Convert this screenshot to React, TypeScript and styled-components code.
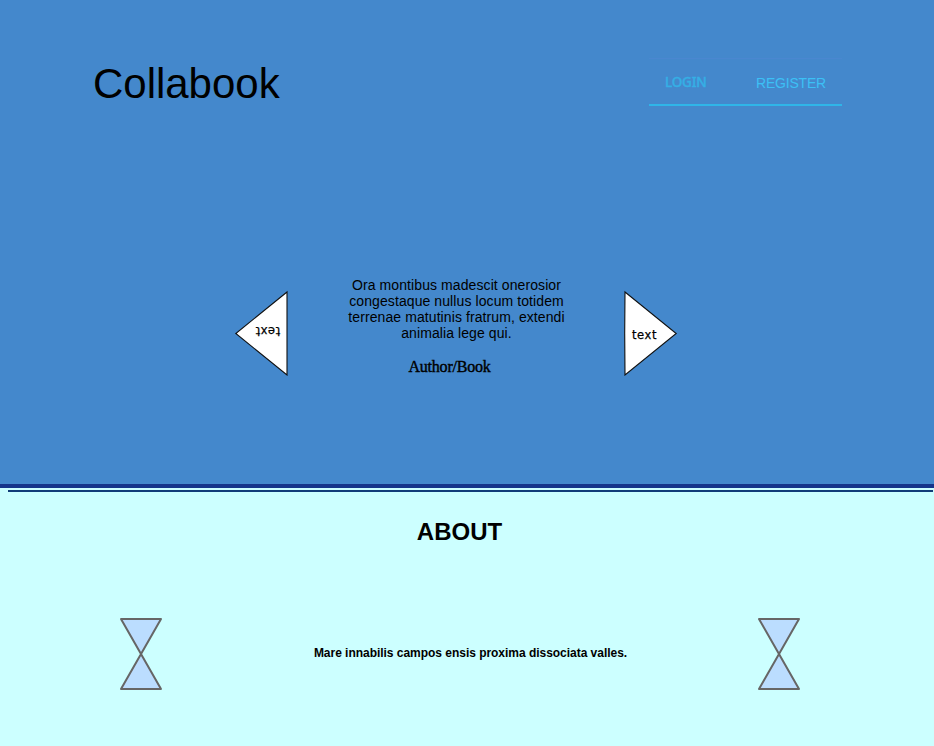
import React from "react";
import styled, { createGlobalStyle } from "styled-components";

const GlobalStyle = createGlobalStyle`
  * { box-sizing: border-box; }
  body {
    margin: 0;
    background: #ccffff;
    font-family: "Liberation Sans", Arial, sans-serif;
    color: #000;
  }
`;

const Page = styled.div`
  width: 934px;
  height: 746px;
  overflow: hidden;
  background: #ccffff;
`;

const Hero = styled.header`
  height: 488px;
  background: #4488cc;
  border-bottom: 4px solid #15348a;
  overflow: hidden;
`;

const TopBar = styled.div`
  display: flex;
  justify-content: space-between;
  align-items: flex-start;
  padding: 58px 92px 0 93px;
`;

const Brand = styled.h1`
  margin: 2px 0 0;
  font-size: 42px;
  line-height: 48px;
  font-weight: 400;
  letter-spacing: -0.02px;
`;

const Nav = styled.nav`
  display: flex;
  align-items: center;
  justify-content: space-between;
  width: 193px;
  height: 48px;
  padding: 1px 16px 0;
  border-top: 1px solid #4a87d0;
  border-bottom: 2px solid #2fb5e8;
`;

const NavLink = styled.a<{ $active?: boolean }>`
  font-family: ${(p) => (p.$active ? '"Noto Sans", sans-serif' : '"Liberation Sans", Arial, sans-serif')};
  font-size: ${(p) => (p.$active ? 13.5 : 14)}px;
  font-weight: ${(p) => (p.$active ? 500 : 400)};
  line-height: 18px;
  letter-spacing: -0.2px;
  color: ${(p) => (p.$active ? "#35afe5" : "#3cc0f5")};
  -webkit-text-stroke: ${(p) => (p.$active ? "0.4px #35afe5" : "0")};
  margin-top: ${(p) => (p.$active ? 0 : 2)}px;
`;

const Carousel = styled.section`
  display: flex;
  justify-content: space-between;
  width: 444px;
  margin: 169px 0 0 234px;
`;

const Arrow = styled.svg`
  display: block;
  width: 54px;
  height: 86px;
  margin-top: 13px;
`;

const ArrowText = styled.text`
  font-family: "DejaVu Sans", sans-serif;
  font-size: 11.5px;
  stroke: #000;
  stroke-width: 0.25px;
`;

const Quote = styled.figure`
  width: 230px;
  margin: 0;
  padding-right: 8px;
  text-align: center;
`;

const QuoteText = styled.p`
  margin: 0 -9px 0 0;
  font-size: 14px;
  line-height: 16px;
  letter-spacing: 0.09px;
`;

const Line = styled.span`
  display: block;
  white-space: nowrap;
`;

const Source = styled.figcaption`
  margin: 17px 5px 0 0;
  font-family: "Liberation Serif", "Times New Roman", serif;
  font-size: 16px;
  line-height: 18px;
  letter-spacing: -0.2px;
  -webkit-text-stroke: 0.4px #000;
`;

const Divider = styled.hr`
  width: 925px;
  height: 2px;
  margin: 2px 0 0 8px;
  border: 0;
  background: #103c78;
`;

const AboutTitle = styled.h2`
  margin: 26px 0 0;
  padding-right: 15px;
  text-align: center;
  font-size: 24px;
  line-height: 28px;
`;

const AboutRow = styled.section`
  display: flex;
  align-items: center;
  justify-content: space-between;
  width: 682px;
  margin: 71px 0 0 119px;
`;

const AboutText = styled.p`
  margin: 0;
  padding: 0 0 2px 21px;
  font-size: 12px;
  line-height: 14px;
  font-weight: 700;
  letter-spacing: -0.03px;
  white-space: nowrap;
`;

const HourglassSvg = styled.svg`
  display: block;
  width: 44px;
  height: 74px;
`;

const Hourglass = () => (
  <HourglassSvg viewBox="0 0 44 74">
    <path d="M2 2H42L22 37Z M22 37L42 72H2Z" fill="#bbddff" stroke="#666666" strokeWidth="2" strokeLinejoin="round" />
  </HourglassSvg>
);

const quote = [
  "Ora montibus madescit onerosior",
  "congestaque nullus locum totidem",
  "terrenae matutinis fratrum, extendi",
  "animalia lege qui.",
];

export default function App() {
  return (
    <Page>
      <GlobalStyle />
      <Hero>
        <TopBar>
          <Brand>Collabook</Brand>
          <Nav>
            <NavLink $active>LOGIN</NavLink>
            <NavLink>REGISTER</NavLink>
          </Nav>
        </TopBar>
        <Carousel>
          <Arrow viewBox="0 0 54 86">
            <path d="M53 2V85L1.8 43.5Z" fill="#fff" stroke="#111" strokeWidth="1.1" />
            <ArrowText x="-46.2" y="-36.5" textLength="24.5" transform="rotate(180)">text</ArrowText>
          </Arrow>
          <Quote>
            <QuoteText>
              {quote.map((line) => (
                <Line key={line}>{line}</Line>
              ))}
            </QuoteText>
            <Source>Author/Book</Source>
          </Quote>
          <Arrow viewBox="0 0 54 86">
            <path d="M1 2L52.2 43.5L1 85L0.7 43.5Z" fill="#fff" stroke="#111" strokeWidth="1.1" />
            <ArrowText x="8" y="49" textLength="24.5">text</ArrowText>
          </Arrow>
        </Carousel>
      </Hero>
      <Divider />
      <AboutTitle>ABOUT</AboutTitle>
      <AboutRow>
        <Hourglass />
        <AboutText>Mare innabilis campos ensis proxima dissociata valles.</AboutText>
        <Hourglass />
      </AboutRow>
    </Page>
  );
}
